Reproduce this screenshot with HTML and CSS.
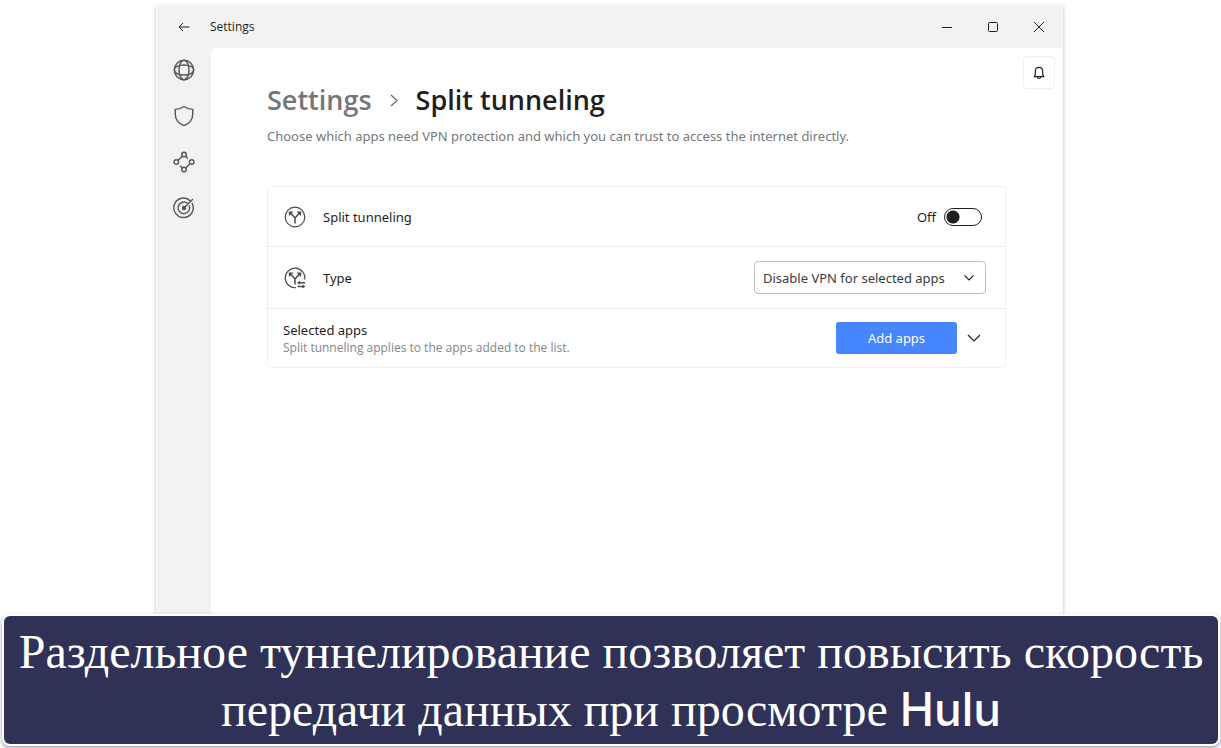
FILE: index.html
```html
<!DOCTYPE html>
<html lang="ru">
<head>
<meta charset="utf-8">
<meta name="viewport" content="width=device-width, initial-scale=1">
<title>Split tunneling</title>
<link rel="stylesheet" href="styles.css">
</head>
<body>
<div class="window" lang="en">
  <header class="titlebar">
    <button class="icon-button back" type="button" aria-label="Back">
      <svg width="12" height="10" viewBox="0 0 12 10"><path d="M11.5 5H1M5 1L1 5l4 4"/></svg>
    </button>
    <span class="window-title">Settings</span>
    <div class="window-controls">
      <button class="icon-button" type="button" aria-label="Minimize"><svg width="12" height="12" viewBox="0 0 12 12"><path d="M1 6.500H11"/></svg></button>
      <button class="icon-button" type="button" aria-label="Maximize"><svg width="12" height="12" viewBox="0 0 12 12"><rect x="1.500" y="1.500" width="9" height="9" rx="1"/></svg></button>
      <button class="icon-button" type="button" aria-label="Close"><svg width="12" height="12" viewBox="0 0 12 12"><path d="M1 1l10 10M11 1L1 11"/></svg></button>
    </div>
  </header>
  <div class="workspace">
    <nav class="sidebar" aria-label="Main">
      <button class="icon-button nav-item" type="button" aria-label="VPN">
        <svg width="22" height="22" viewBox="0 0 22 22"><circle cx="11" cy="11" r="9.700"/><ellipse cx="11" cy="11" rx="5" ry="9.700"/><ellipse cx="11" cy="11" rx="9.700" ry="5"/></svg>
      </button>
      <button class="icon-button nav-item" type="button" aria-label="Threat protection">
        <svg width="22" height="22" viewBox="0 0 22 22"><path d="M11 1.500C8.500 3.300 5.500 4.200 2.300 4.400v4.800c0 5.500 3.200 9.200 8.700 11.500 5.500-2.300 8.700-6 8.700-11.500V4.400C16.500 4.200 13.500 3.300 11 1.500z"/></svg>
      </button>
      <button class="icon-button nav-item" type="button" aria-label="Meshnet">
        <svg width="22" height="22" viewBox="0 0 22 22"><circle cx="11" cy="3.500" r="2.300"/><circle cx="3.300" cy="11" r="2.300"/><circle cx="18.700" cy="11" r="2.300"/><circle cx="11" cy="18.500" r="2.300"/><path d="M9.300 5.200L5 9.300M12.700 5.200L15 7.500M17 12.700l-4.300 4.200M9.300 16.900L7 14.700"/></svg>
      </button>
      <button class="icon-button nav-item" type="button" aria-label="Dark web monitor">
        <svg width="22" height="22" viewBox="0 0 22 22"><path d="M17.500 4A9.700 9.700 0 1 0 19 6"/><path d="M14.700 6.500A5.800 5.800 0 1 0 16.200 8.500"/><path d="M11 11l9-9"/><circle class="solid" cx="11" cy="11" r="2.200"/></svg>
      </button>
    </nav>
    <main class="page">
      <button class="icon-button notifications" type="button" aria-label="Notifications">
        <svg width="12" height="14" viewBox="0 0 12 14"><path d="M6 1.300c-2.400 0-3.700 1.800-3.700 4v3L1.300 10.700h9.400l-1-2.400v-3c0-2.200-1.300-4-3.700-4zM4.200 11c.2 1 .9 1.500 1.800 1.500s1.600-.5 1.800-1.500"/></svg>
      </button>
      <h1 class="breadcrumb">
        <a class="parent" href="#">Settings</a>
        <svg width="10" height="14" viewBox="0 0 10 14" aria-hidden="true"><path d="M2 2l6 5.500L2 13"/></svg>
        <span>Split tunneling</span>
      </h1>
      <p class="intro">Choose which apps need VPN protection and which you can trust to access the internet directly.</p>
      <section class="card">
        <div class="row">
          <svg class="row-icon" width="22" height="22" viewBox="0 0 22 22"><circle cx="11" cy="11" r="9.800"/><path class="branch" d="M11 17.500V12L7 7.500M11 12L15 7.500"/><path class="solid" d="M4.700 5.500H9.500L5 10zM17.300 5.500H12.500L17 10z"/></svg>
          <label class="row-label" for="split">Split tunneling</label>
          <span class="state">Off</span>
          <input class="switch" id="split" type="checkbox" role="switch">
        </div>
        <div class="row">
          <svg class="row-icon" width="22" height="22" viewBox="0 0 22 22"><path d="M12 20.700A9.800 9.800 0 1 1 20.700 12.500"/><path class="branch" d="M11 17.500V12L7 7.500M11 12L15 7.500M14.500 15.700h6.500M13.500 19.500h6"/><path class="solid" d="M4.700 5.500H9.500L5 10zM17.300 5.500H12.500L17 10zM13 15.700l3-2v4zM21.500 19.500l-3-2v4z"/></svg>
          <label class="row-label" for="type">Type</label>
          <span class="select-box">
            <select id="type"><option>Disable VPN for selected apps</option><option>Enable VPN for selected apps</option></select>
            <svg class="select-arrow" width="12" height="8" viewBox="0 0 12 8" aria-hidden="true"><path d="M1.500 1.300L6 6l4.500-4.700"/></svg>
          </span>
        </div>
        <div class="row">
          <div class="row-text">
            <h2>Selected apps</h2>
            <p>Split tunneling applies to the apps added to the list.</p>
          </div>
          <button class="primary" type="button">Add apps</button>
          <button class="icon-button expand" type="button" aria-label="Expand"><svg width="14" height="8" viewBox="0 0 14 8"><path d="M1 1l6 6 6-6"/></svg></button>
        </div>
      </section>
    </main>
  </div>
</div>
<p class="caption"><span>Раздельное туннелирование позволяет повысить скорость</span> <span>передачи данных при просмотре</span> <span class="brand">Hulu</span></p>
</body>
</html>
```
FILE: styles.css
```css
* {
  box-sizing: border-box;
}

body {
  margin: 0;
  min-height: 100vh;
  padding: 5px 3px 4px 4px;
  display: flex;
  flex-direction: column;
  background: #fff;
  color: #1f1f23;
  font-family: "Noto Sans", "Open Sans", sans-serif;
  font-size: 13px;
  line-height: 20px;
}

h1, h2, p {
  margin: 0;
  font-weight: 400;
}

svg {
  display: block;
  flex: none;
  fill: none;
  stroke: currentColor;
  stroke-width: 1.2;
}

.solid {
  fill: currentColor;
  stroke: none;
}

.branch {
  stroke-width: 1.5;
}

.icon-button {
  display: flex;
  align-items: center;
  justify-content: center;
  padding: 0;
  border: 0;
  background: none;
  color: inherit;
}

.window {
  flex: 1;
  display: flex;
  flex-direction: column;
  margin: 0 156px 0 153px;
  background: #f2f2f2;
  box-shadow: 0 0 0 1px #fafafa, 0 2px 4px 1px #c0c0ca;
}

.titlebar {
  display: flex;
  align-items: center;
  height: 43px;
}

.titlebar svg {
  stroke-width: 1;
}

.back {
  width: 53px;
  height: 43px;
}

.window-title {
  flex: 1;
  font-family: "Open Sans", sans-serif;
  font-size: 12px;
  line-height: 20px;
}

.window-controls {
  display: flex;
}

.window-controls .icon-button {
  width: 46px;
  height: 43px;
}

.workspace {
  flex: 1;
  display: flex;
}

.sidebar {
  width: 54px;
  flex: none;
  display: flex;
  flex-direction: column;
  align-items: center;
  gap: 3px;
  color: #55555a;
}

.sidebar svg {
  stroke-width: 1.4;
}

.nav-item {
  width: 44px;
  height: 43px;
}

.page {
  flex: 1;
  position: relative;
  padding: 32px 56px;
  background: #fff;
  border-top-left-radius: 6px;
}

.notifications {
  position: absolute;
  top: 8px;
  right: 7px;
  width: 32px;
  height: 33px;
  border: 1px solid #f0f0f0;
  border-radius: 4px;
}

.breadcrumb {
  display: flex;
  align-items: center;
  gap: 17px;
  font-family: "Open Sans", sans-serif;
  font-size: 27px;
  font-weight: 600;
  line-height: 40px;
}

.breadcrumb svg {
  color: #66666b;
}

.parent {
  color: #767678;
  text-decoration: none;
}

.intro {
  margin-top: 6px;
  color: #77777c;
}

.card {
  margin-top: 40px;
  border: 1px solid #f0f0f0;
  border-radius: 4px;
}

.row {
  display: flex;
  align-items: center;
  min-height: 59px;
  padding: 14px 19px 14px 16px;
}

.row + .row {
  border-top: 1px solid #ececec;
}

.row-icon {
  color: #4a4a4f;
}

.row-label {
  flex: 1;
  margin-left: 17px;
}

.state {
  margin-right: 8px;
}

.switch {
  appearance: none;
  width: 38px;
  height: 18px;
  margin: 0 4px 0 0;
  border: 1px solid #1f1f1f;
  border-radius: 9px;
  background: radial-gradient(circle at 8px 8px, #1f1f1f 6px, #fff 7px);
}

.select-box {
  display: grid;
  align-items: center;
}

.select-box > * {
  grid-area: 1 / 1;
}

select {
  appearance: none;
  width: 232px;
  height: 33px;
  padding: 0 32px 0 8px;
  border: 1px solid #bdbdc4;
  border-radius: 4px;
  background: #fff;
  color: #3b3b40;
  font: inherit;
}

.select-arrow {
  justify-self: end;
  margin-right: 11px;
  pointer-events: none;
}

.row-text {
  flex: 1;
}

.row-text h2 {
  font-size: 13px;
  line-height: 20px;
}

.row-text p {
  color: #85858a;
  font-family: "Open Sans", sans-serif;
  font-size: 12px;
  line-height: 16px;
}

.row:last-child {
  padding: 0 24px 0 15px;
}

.primary {
  width: 121px;
  height: 32px;
  border: 0;
  border-radius: 3px;
  background: #4687ff;
  color: #fff;
  font: inherit;
}

.expand {
  margin-left: 10px;
  height: 32px;
}

.caption {
  position: relative;
  padding: 7px 10px 5px;
  border-radius: 6px;
  background: #2f3156;
  box-shadow: 0 0 0 2px #fff, 0 2px 4px 2px #9c9ca6;
  color: #fff;
  font-family: "Liberation Serif", serif;
  font-size: 48px;
  line-height: 58px;
  text-align: center;
}

.brand {
  display: inline-block;
  font-family: Inter, sans-serif;
  font-size: 46px;
  font-weight: 500;
  line-height: 50px;
}
```
